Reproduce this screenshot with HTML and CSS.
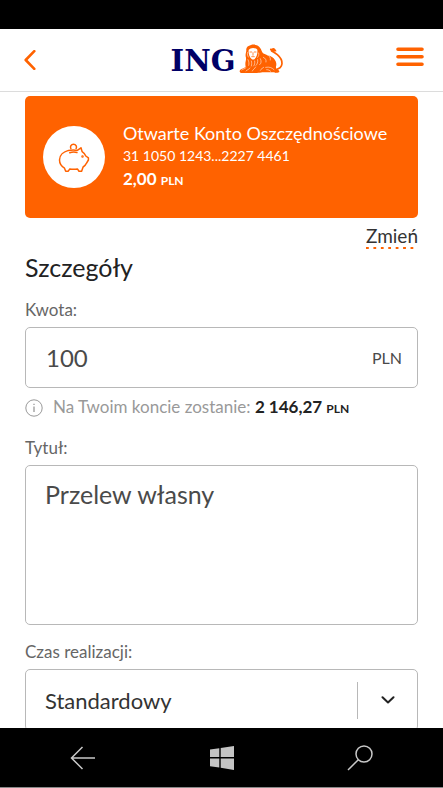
FILE: index.html
```html
<!DOCTYPE html>
<html lang="pl">
<head>
<meta charset="utf-8">
<meta name="viewport" content="width=device-width, initial-scale=1">
<title>ING</title>
<link rel="stylesheet" href="styles.css">
</head>
<body>
<div class="status-bar"></div>
<header class="top-bar">
  <button class="icon-button" type="button" aria-label="Wstecz">
    <svg width="12" height="20" viewBox="0 0 12 20" fill="none" stroke="#ff6200" stroke-width="2.6" stroke-linecap="round" stroke-linejoin="round"><path d="M10.3 1.2 1.7 10l8.6 8.8"/></svg>
  </button>
  <a class="brand" href="#">
    <span class="brand-name">ING</span>
    <svg width="46" height="30" viewBox="12 12 138 90" fill="none" stroke-linecap="round" stroke-linejoin="round">
      <path fill="#ff6200" d="M34 31c-2-8 5-14 14-16 10-3 22 0 27 8 5 6 5 12 9 17 8 5 20 6 28 12 7 5 11 12 12 19 0 4 0 6-1 8v18H82c-9 3-24 1-31 2H21c-7 0-9-6-5-10 3-4 12-4 16-9-3-13 2-17 1-27-3-7 0-13 1-22z"/>
      <path stroke="#ff6200" stroke-width="5" d="M122 89c11-2 18-9 19-18 1-11-6-20-14-27-6-5-11-8-17-11"/>
      <path fill="#ff6200" d="M105 30c-1-4 2-6 5-4 4-3 8-2 11 2l4 6-9 1c-4 0-8-1-11-5zM120 87c9 0 14 5 13 9-3 3-9 2-14 2z"/>
      <path fill="#fff" d="M41 30c5-8 20-8 26-1 1 10-1 21-8 28-3 3-7 2-10-1-6-6-9-16-8-26z"/>
      <path stroke="#ff6200" stroke-width="2.2" d="M45 36h5m8 0h5M54 38v8m-4 4h8"/>
      <path stroke="#fff" stroke-width="1.6" d="M38 37c-2 6 0 10 2 14m31-12c2 6-1 10-3 13M39 59c3 7 4 12 2 17m8-13c2 5 1 10 0 15m10-15c1 6 0 12-3 15m12-19c1 8-1 13-5 17M33 83c-4 4-9 4-13 7m25-6c-4 5-9 5-12 9m29-12c-3 6-8 7-10 12m24-37c4 8 3 14-2 18m11-22c7 3 9 8 8 14m3-22c8 3 11 9 10 16M86 82c-3 3-8 4-10 9m16-9c12-2 19 1 25 7m-22 0c6 0 9 2 12 5"/>
    </svg>
  </a>
  <button class="icon-button" type="button" aria-label="Menu">
    <svg width="28" height="20" viewBox="0 0 28 20" stroke="#ff6200" stroke-width="3.6" stroke-linecap="round"><path d="M2 2.2h24M2 9.7h24M2 17.2h24"/></svg>
  </button>
</header>
<main class="content">
  <section class="account">
    <div class="account-icon">
      <svg width="32" height="32" viewBox="0 0 32 32" fill="none" stroke="#ff6200" stroke-width="1.5" stroke-linecap="round" stroke-linejoin="round">
        <path d="M10.5 9.4C5.700 10.700 1.500 14.200 1.500 19c0 3.300 2 6.300 5 8.200L7.700 30.200h2.600l1.500-2.300c2.600.6 5 .6 7.600 0l1.600 2.300h2.600l1.500-4.200c1.700-1 2.700-2.200 3.300-3.700L30.400 19v-2.200L27.800 15c-.8-1.900-2.100-3.400-3.700-4.400L23 6.800l-3.700 2.600c-2.500-.5-5.400-.5-8.800 0zM11.800 11.800c2.500-.9 5-.9 7.200-.2"/>
        <path d="M12.900 7.700A3 3 0 1 1 18.100 7.700"/>
        <circle cx="24.500" cy="15.500" r=".5"/>
      </svg>
    </div>
    <div class="account-text">
      <h1 class="account-name">Otwarte Konto Oszczędnościowe</h1>
      <p class="account-number">31 1050 1243...2227 4461</p>
      <p class="account-balance">2,00 <small>PLN</small></p>
    </div>
  </section>
  <a class="change" href="#">Zmień</a>
  <form class="details">
    <h2 class="heading">Szczegóły</h2>
    <label class="label" for="amount">Kwota:</label>
    <div class="field amount-field">
      <input id="amount" type="text" inputmode="decimal" value="100">
      <span class="currency">PLN</span>
    </div>
    <p class="hint">
      <svg width="18" height="18" viewBox="0 0 18 18" fill="none" stroke="#999"><circle cx="9" cy="9" r="8.200"/><path stroke-width="1.300" d="M9 7.500v5.500M9 4.800v1.300"/></svg>
      <span>Na Twoim koncie zostanie: <strong>2 146,27 <small>PLN</small></strong></span>
    </p>
    <label class="label" for="title">Tytuł:</label>
    <textarea class="field title-field" id="title">Przelew własny</textarea>
    <label class="label" for="time">Czas realizacji:</label>
    <div class="field select-field">
      <select id="time"><option>Standardowy</option></select>
      <span class="select-arrow">
        <svg width="14" height="8" viewBox="0 0 14 8" fill="none" stroke="#222" stroke-width="2" stroke-linecap="round" stroke-linejoin="round"><path d="m1.500 1.200 5.500 5.300 5.500-5.300"/></svg>
      </span>
    </div>
  </form>
</main>
<nav class="system-bar">
  <button type="button" aria-label="Cofnij">
    <svg width="26" height="24" viewBox="0 0 26 24" fill="none" stroke="#c8c8c8" stroke-width="1.500"><path d="M25 12H1.500M12.500 1 1.500 12l11 11"/></svg>
  </button>
  <button type="button" aria-label="Start">
    <svg width="24" height="24" viewBox="0 0 24 24" fill="#c4c4c4"><path d="M0 3.600 9.300 2.200v8.900H0zM10.700 2 24 0v11.100H10.700zM0 12.500h9.300v9L0 20.200zM10.700 12.500H24V24l-13.300-2.200z"/></svg>
  </button>
  <button type="button" aria-label="Szukaj">
    <svg width="26" height="26" viewBox="0 0 26 26" fill="none" stroke="#c8c8c8" stroke-width="1.500"><circle cx="17" cy="9" r="8"/><path d="M11.300 14.700 1 25"/></svg>
  </button>
</nav>
</body>
</html>
```
FILE: styles.css
```css
* {
  box-sizing: border-box;
}

body {
  margin: 0;
  height: 100vh;
  display: flex;
  flex-direction: column;
  overflow: hidden;
  background: #fff;
  color: #333;
  font-family: Lato, "Open Sans", sans-serif;
}

h1,
h2,
p {
  margin: 0;
  font-weight: 400;
}

button,
input,
select,
textarea {
  padding: 0;
  border: 0;
  background: none;
  color: inherit;
  font: inherit;
  outline: 0;
}

svg {
  display: block;
  flex: none;
}

a {
  color: inherit;
  text-decoration: none;
}

.status-bar {
  flex: none;
  height: 29px;
  background: #000;
}

.top-bar {
  flex: none;
  display: grid;
  grid-template-columns: 1fr auto 1fr;
  align-items: center;
  height: 63px;
  padding: 0 19px 0 24px;
  border-bottom: 1px solid #dcdcdc;
}

.icon-button:first-child {
  justify-self: start;
}

.icon-button:last-child {
  justify-self: end;
  padding-bottom: 6px;
}

.brand {
  display: flex;
  align-items: center;
  gap: 4px;
  padding: 0 0 3px 8px;
  color: #000066;
}

.brand-name {
  padding-top: 5px;
  font: bold 29px/32px "DejaVu Serif", serif;
}

.content {
  flex: 1;
  min-height: 0;
  overflow: hidden;
  padding: 4px 25px 0;
}

.account {
  display: flex;
  align-items: center;
  gap: 18px;
  height: 122px;
  padding: 0 18px;
  border-radius: 5px;
  background: #ff6200;
  color: #fff;
}

.account-icon {
  flex: none;
  display: grid;
  place-items: center;
  width: 62px;
  height: 62px;
  border-radius: 50%;
  background: #fff;
}

.account-name {
  font-size: 18px;
  line-height: 24px;
  white-space: nowrap;
}

.account-number {
  font-size: 14px;
  line-height: 22px;
}

.account-balance {
  font-size: 17px;
  line-height: 24px;
  font-weight: 700;
}

small {
  font-size: 12px;
}

.change {
  display: block;
  width: fit-content;
  margin: 7px 0 0 auto;
  padding-bottom: 2px;
  background: linear-gradient(90deg, #ff6200 3px, transparent 3px) 0 100% / 8px 2px;
  background-repeat: round no-repeat;
  font-size: 19px;
  line-height: 22px;
}

.heading {
  margin-top: 2px;
  color: #222;
  font-size: 25px;
  line-height: 32px;
}

.label {
  display: block;
  margin: 17px 0 7px;
  color: #666;
  font-size: 17px;
  line-height: 20px;
}

.field {
  display: flex;
  width: 100%;
  border: 1px solid #b8b8b8;
  border-radius: 5px;
  color: #4a4a4a;
}

.amount-field {
  align-items: center;
  height: 61px;
  padding: 0 15px 0 20px;
}

.amount-field input {
  flex: 1;
  min-width: 0;
  font-size: 24px;
}

.currency {
  font-size: 16px;
}

.hint {
  display: flex;
  align-items: center;
  gap: 10px;
  margin-top: 7px;
  color: #999;
  font-size: 17px;
  line-height: 24px;
}

.hint strong {
  color: #222;
}

.title-field {
  height: 160px;
  padding: 12px 19px;
  resize: none;
  font-size: 25px;
  line-height: 32px;
}

.select-field {
  align-items: center;
  height: 62px;
  color: #333;
}

.select-field select {
  flex: 1;
  align-self: stretch;
  min-width: 0;
  padding-left: 19px;
  appearance: none;
  font-size: 22px;
}

.select-arrow {
  display: grid;
  place-items: center;
  width: 60px;
  height: 37px;
  border-left: 1px solid #b8b8b8;
}

.system-bar {
  flex: none;
  display: flex;
  justify-content: space-between;
  align-items: center;
  height: 60px;
  padding: 0 70px;
  border-bottom: 1px solid #888;
  background: #000;
}
```
